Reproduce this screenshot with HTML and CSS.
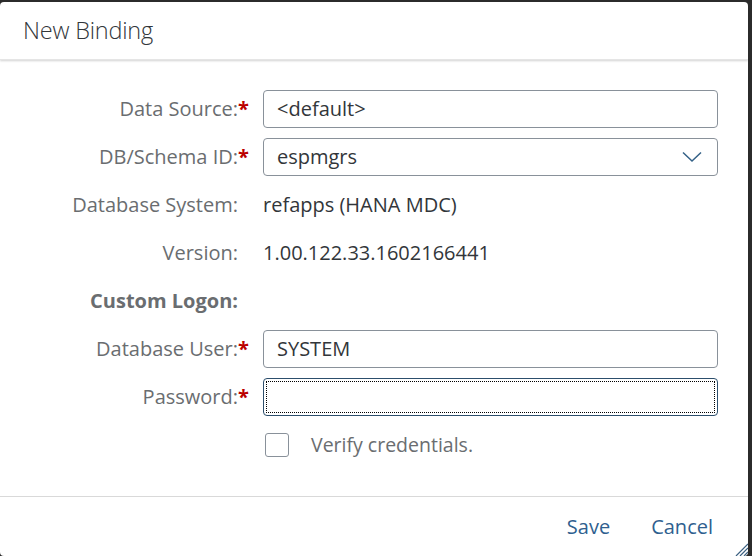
FILE: index.html
```html
<!DOCTYPE html>
<html>
<head>
<meta charset="utf-8">
<link rel="stylesheet" href="styles.css">
</head>
<body>
<div class="dialog">
  <header class="head"><h1 class="title">New Binding</h1></header>
  <main class="form">
    <div class="row">
      <label class="lbl">Data Source:<span class="req">*</span></label>
      <div class="input"><span class="val">&lt;default&gt;</span></div>
    </div>
    <div class="row">
      <label class="lbl">DB/Schema ID:<span class="req">*</span></label>
      <div class="input select"><span class="val">espmgrs</span>
        <svg class="chev" width="22" height="12" viewBox="0 0 22 12"><polyline points="2,1.5 11,10 20,1.5" fill="none" stroke="#346187" stroke-width="1.5"/></svg>
      </div>
    </div>
    <div class="row">
      <label class="lbl plain">Database System:</label>
      <div class="text">refapps (HANA MDC)</div>
    </div>
    <div class="row">
      <label class="lbl plain">Version:</label>
      <div class="text">1.00.122.33.1602166441</div>
    </div>
    <div class="row">
      <label class="lbl plain bold">Custom Logon:</label>
      <div></div>
    </div>
    <div class="row">
      <label class="lbl">Database User:<span class="req">*</span></label>
      <div class="input"><span class="val">SYSTEM</span></div>
    </div>
    <div class="row">
      <label class="lbl">Password:<span class="req">*</span></label>
      <div class="input focus"><div class="dots"></div></div>
    </div>
    <div class="row">
      <div></div>
      <div class="check"><span class="box"></span><span class="ctext">Verify credentials.</span></div>
    </div>
  </main>
  <footer class="foot">
    <button class="btn">Save</button>
    <button class="btn">Cancel</button>
    <svg class="grip" width="14" height="14" viewBox="0 0 14 14"><line x1="2" y1="14" x2="14" y2="2" stroke="#3a5f80" stroke-width="1.2"/><line x1="6" y1="14" x2="14" y2="6" stroke="#3a5f80" stroke-width="1.2"/><line x1="10" y1="14" x2="14" y2="10" stroke="#3a5f80" stroke-width="1.2"/></svg>
  </footer>
</div>
</body>
</html>
```
FILE: styles.css
```css
html, body {
  margin: 0;
  padding: 0;
  background: #2b2b2b;
  font-family: "Open Sans", "Liberation Sans", sans-serif;
}
.dialog {
  margin-top: 2px;
  width: 748px;
  height: 554px;
  background: #fff;
  border-radius: 4px;
  display: flex;
  flex-direction: column;
  overflow: hidden;
  position: relative;
}
.head {
  height: 58px;
  display: flex;
  align-items: center;
  padding-left: 23px;
  box-shadow: 0 1px 2px rgba(0,0,0,0.18);
  border-bottom: 1px solid #e5e5e5;
  box-sizing: border-box;
  flex: none;
}
.title {
  margin: 0 0 2px 0;
  font-size: 23.5px;
  font-weight: 300;
  color: #32363a;
  letter-spacing: -0.2px;
}
.form {
  padding-top: 30px;
  flex: 1;
  display: flex;
  flex-direction: column;
  gap: 10px;
}
.row {
  display: grid;
  grid-template-columns: 249px 455px;
  column-gap: 14px;
  height: 38px;
  align-items: center;
}
.lbl {
  text-align: right;
  font-size: 20px;
  color: #6a6d70;
  white-space: nowrap;
  padding-bottom: 2px;
}
.lbl.plain { padding-right: 11px; }
.lbl.bold { font-weight: 700; color: #6a6d70; }
.req {
  display: inline-block;
  width: 11px;
  text-align: right;
  color: #bb0000;
  font-weight: 700;
}
.input {
  height: 38px;
  box-sizing: border-box;
  border: 1px solid #89919a;
  border-radius: 4px;
  display: flex;
  align-items: center;
  padding-left: 13px;
  padding-bottom: 2px;
  position: relative;
}
.val {
  font-size: 20px;
  color: #32363a;
}
.select { justify-content: space-between; padding-right: 14px; padding-bottom: 0; }
.select .val { padding-bottom: 2px; }
.chev { display: block; }
.focus {
  border-color: #2c4e6c;
  padding: 2px;
}
.dots {
  flex: 1;
  align-self: stretch;
  border: 1px dotted #000;
}
.text {
  font-size: 20px;
  color: #32363a;
  padding-bottom: 2px;
}
.check {
  display: flex;
  align-items: center;
}
.box {
  width: 24px;
  height: 24px;
  box-sizing: border-box;
  border: 1px solid #89919a;
  border-radius: 3px;
  margin-left: 2px;
  margin-right: 22px;
}
.ctext {
  font-size: 19.5px;
  color: #6a6d70;
  padding-bottom: 2px;
}
.foot {
  height: 59px;
  border-top: 1px solid #d9d9d9;
  display: flex;
  justify-content: flex-end;
  align-items: center;
  gap: 25px;
  padding-right: 27px;
  flex: none;
  position: relative;
}
.btn {
  background: none;
  border: 0;
  font-family: inherit;
  font-size: 20px;
  color: #2f5f8f;
  padding: 0 8px;
  height: 36px;
}
.grip {
  position: absolute;
  right: 0;
  bottom: 0;
}
```
